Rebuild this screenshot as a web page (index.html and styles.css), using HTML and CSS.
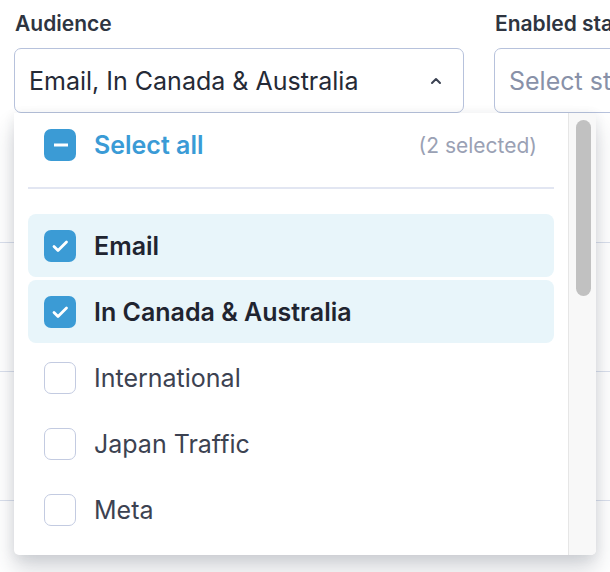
FILE: index.html
```html
<!DOCTYPE html>
<html>
<head>
    <title>Audience filter</title>
    <meta charset="utf-8">
    <link rel="stylesheet" href="styles.css">
</head>
<body>
    <div class="filters">
        <div class="field field-audience">
            <label class="field-label">Audience</label>
            <div class="select-wrap">
                <div class="select select-open">
                    <span class="select-value">Email, In Canada &amp; Australia</span>
                    <svg class="chevron" width="14" height="10" viewBox="0 0 14 10">
                        <path d="M3 7 L7 3 L11 7" fill="none" stroke="#3b4252" stroke-width="2" stroke-linecap="round" stroke-linejoin="round"/>
                    </svg>
                </div>

                <!-- open dropdown menu -->
                <div class="dropdown">
                    <div class="options">
                        <div class="select-all">
                            <span class="checkbox checked">
                                <svg width="32" height="32" viewBox="0 0 32 32"><rect x="10" y="14.5" width="14" height="3" fill="#fff"/></svg>
                            </span>
                            <span class="select-all-text">Select all</span>
                            <span class="count">(2 selected)</span>
                        </div>
                        <div class="divider"></div>
                        <ul class="option-list">
                            <li class="option selected">
                                <span class="checkbox checked">
                                    <svg width="32" height="32" viewBox="0 0 32 32"><path d="M10 16.5 L14 20.5 L22.5 12" fill="none" stroke="#fff" stroke-width="2.8" stroke-linecap="round" stroke-linejoin="round"/></svg>
                                </span>
                                Email
                            </li>
                            <li class="option selected">
                                <span class="checkbox checked">
                                    <svg width="32" height="32" viewBox="0 0 32 32"><path d="M10 16.5 L14 20.5 L22.5 12" fill="none" stroke="#fff" stroke-width="2.8" stroke-linecap="round" stroke-linejoin="round"/></svg>
                                </span>
                                In Canada &amp; Australia
                            </li>
                            <li class="option"><span class="checkbox"></span>International</li>
                            <li class="option"><span class="checkbox"></span>Japan Traffic</li>
                            <li class="option"><span class="checkbox"></span>Meta</li>
                        </ul>
                    </div>
                    <div class="scrollbar"><div class="scroll-thumb"></div></div>
                </div>
            </div>
        </div>

        <div class="field field-status">
            <label class="field-label">Enabled statuses</label>
            <div class="select">
                <span class="placeholder">Select statuses</span>
            </div>
        </div>
    </div>

    <div class="table-rows">
        <div class="table-row"></div>
        <div class="table-row"></div>
        <div class="table-row"></div>
    </div>
</body>
</html>
```

FILE: styles.css
```css
html, body {
    overflow: hidden;
}

body {
    margin: 0;
    padding: 0 0 0 14px;
    min-height: 572px;
    background-color: #ffffff;
    font-family: Inter, "Noto Sans", sans-serif;
    color: #1f2430;
}

.filters {
    display: flex;
    gap: 30px;
    padding-top: 12px;
    width: 900px;
}

.field {
    display: flex;
    flex-direction: column;
}

.field-audience {
    width: 450px;
}

.field-status {
    width: 400px;
}

.field-label {
    font-size: 21px;
    font-weight: 600;
    color: #2e3440;
    line-height: 24px;
    margin: 0 0 12px 1px;
}

.select-wrap {
    position: relative;
}

.select {
    box-sizing: border-box;
    height: 65px;
    border: 1.5px solid #b7c2dc;
    border-radius: 7px;
    display: flex;
    align-items: center;
    padding: 0 20px 0 14px;
    font-size: 25px;
}

.select-value {
    flex: 1;
    color: #252a36;
}

.placeholder {
    color: #8891a8;
}

/* dropdown panel, lies over the page */
.dropdown {
    position: absolute;
    top: 100%;
    left: 0;
    width: 582px;
    height: 442px;
    background: #ffffff;
    border-radius: 0 0 5px 5px;
    box-shadow: 0 14px 22px rgba(40, 50, 70, 0.2), 0 2px 12px rgba(40, 50, 70, 0.08);
    display: flex;
    overflow: hidden;
    z-index: 5;
}

.options {
    flex: 1;
    padding: 14px;
    overflow: hidden;
}

.select-all {
    display: flex;
    align-items: center;
    height: 36px;
    padding: 0 17px 0 16px;
}

.select-all-text {
    flex: 1;
    color: #3a9bd6;
    font-size: 25px;
    font-weight: 600;
    margin-left: 18px;
}

.count {
    color: #9aa1b4;
    font-size: 21px;
}

.divider {
    height: 2px;
    background: #e2e6f2;
    margin: 24px 0 25px 0;
}

.option-list {
    list-style: none;
    margin: 0;
    padding: 0;
    display: flex;
    flex-direction: column;
    gap: 3px;
}

.option {
    display: flex;
    align-items: center;
    height: 63px;
    padding-left: 16px;
    border-radius: 8px;
    font-size: 25px;
    color: #3c4251;
    gap: 18px;
}

.option.selected {
    background: #e8f5fa;
    color: #1f2430;
    font-weight: 600;
}

.checkbox {
    box-sizing: border-box;
    width: 32px;
    height: 32px;
    flex-shrink: 0;
    border: 1.5px solid #c3cbe1;
    border-radius: 7px;
    background: #ffffff;
    display: flex;
}

.checkbox.checked {
    border: none;
    background: #3b9bd5;
}

.scrollbar {
    box-sizing: border-box;
    width: 28px;
    border-left: 1px solid #e6e6e6;
    background: #f8f8f8;
    padding: 7px 5px 0 7px;
}

.scroll-thumb {
    height: 176px;
    border-radius: 8px;
    background: #c1c1c1;
}

/* rows of the table behind the menu */
.table-rows {
    margin-top: 1px;
    margin-left: -14px;
}

.table-row {
    height: 128px;
    border-bottom: 1px solid #d9dfec;
}
```
